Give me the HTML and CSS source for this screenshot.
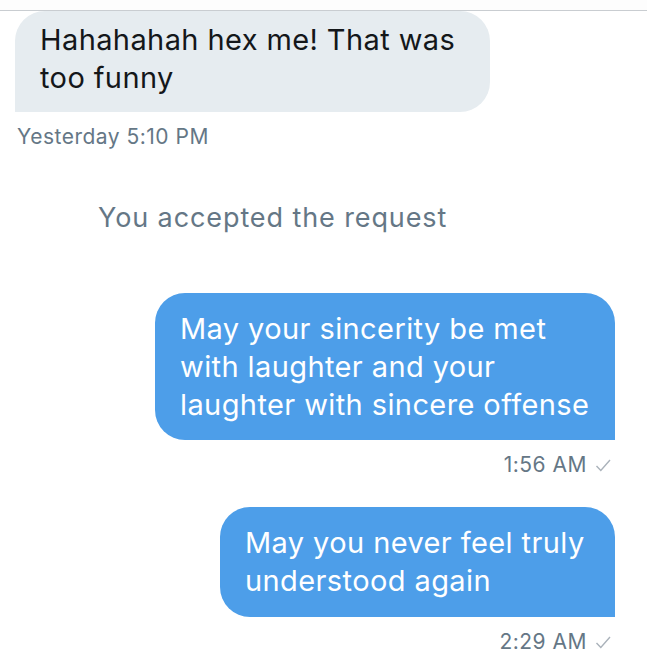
FILE: index.html
```html
<!DOCTYPE html>
<html>
<head>
<meta charset="utf-8">
<link rel="stylesheet" href="styles.css">
</head>
<body>
<div class="header"></div>
<main class="thread">
  <div class="bubble in">Hahahahah hex me! That was<br>too funny</div>
  <div class="time">Yesterday 5:10 PM</div>
  <div class="notice">You accepted the request</div>
  <div class="bubble out wide">May your sincerity be met<br>with laughter and your<br>laughter with sincere offense</div>
  <div class="time sent">1:56 AM <svg class="check" width="17" height="15" viewBox="0 0 17 15"><path d="M1.5 8 L5.8 12.5 L15 2" fill="none" stroke="#aab2ba" stroke-width="1.4"/></svg></div>
  <div class="bubble out narrow">May you never feel truly<br>understood again</div>
  <div class="time sent">2:29 AM <svg class="check" width="17" height="15" viewBox="0 0 17 15"><path d="M1.5 8 L5.8 12.5 L15 2" fill="none" stroke="#aab2ba" stroke-width="1.4"/></svg></div>
</main>
</body>
</html>
```
FILE: styles.css
```css
html, body {
  margin: 0;
  padding: 0;
  background: #ffffff;
}
body {
  width: 647px;
  height: 670px;
  overflow: hidden;
  font-family: Inter, "Noto Sans", sans-serif;
}
.header {
  height: 10px;
  border-bottom: 1px solid #c9cdd1;
  background: #fdfdfd;
}
.thread {
  display: flex;
  flex-direction: column;
  padding: 0 32px 0 15px;
}
.bubble {
  font-size: 29px;
  line-height: 38px;
  letter-spacing: 0.4px;
  padding: 17px 20px 17px 25px;
  box-sizing: border-box;
  white-space: nowrap;
}
.bubble.in {
  width: 475px;
  height: 101px;
  background: #e6ecf0;
  color: #14171a;
  border-radius: 30px 30px 30px 0;
  padding-top: 10px;
}
.bubble.out {
  align-self: flex-end;
  background: #4d9ee9;
  color: #ffffff;
  border-radius: 30px 30px 0 30px;
}
.bubble.wide { width: 460px; height: 147px; margin-top: 59px; }
.bubble.narrow { width: 395px; height: 110px; margin-top: 29px; }
.time {
  font-size: 21px;
  line-height: 26px;
  letter-spacing: 0.5px;
  color: #657786;
  margin-top: 12px;
  padding-left: 2px;
}
.time.sent {
  align-self: flex-end;
  display: flex;
  align-items: center;
  gap: 8px;
  padding-right: 3px;
}
.notice {
  font-size: 27px;
  line-height: 32px;
  letter-spacing: 0.9px;
  color: #657786;
  margin-top: 52px;
  padding-left: 83px;
}
```
